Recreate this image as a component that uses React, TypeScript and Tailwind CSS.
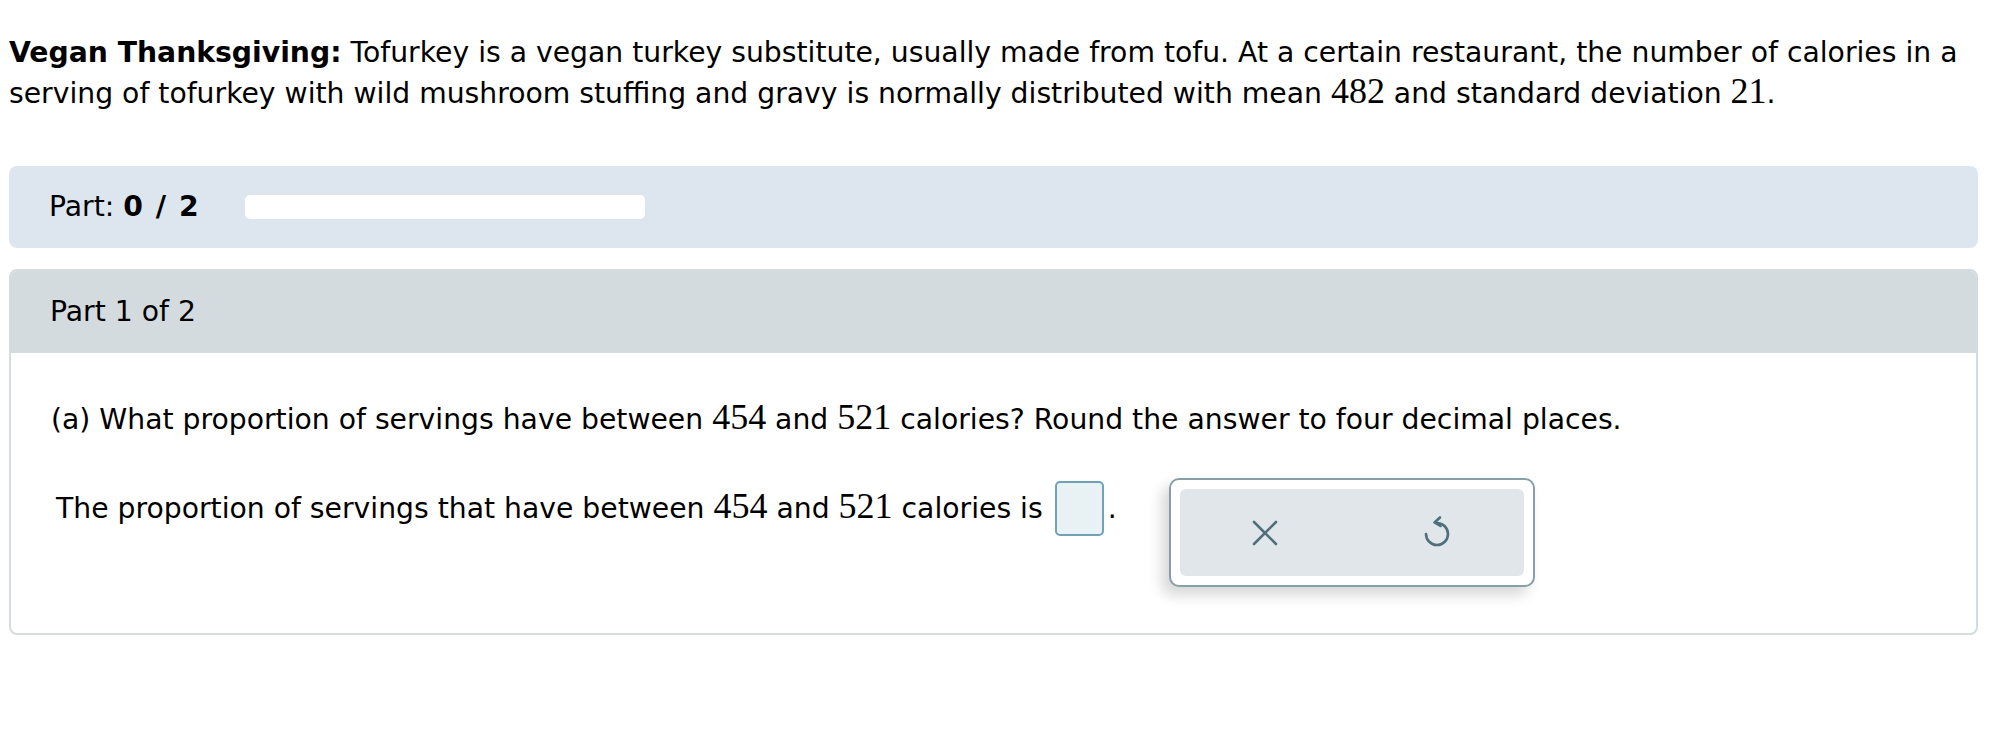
const num = 'font-["Liberation_Serif",serif] text-[36px] leading-none'

function CloseIcon() {
  return (
    <svg width="26" height="26" viewBox="0 0 26 26" fill="none" stroke="#4f6f7a" strokeWidth="2.6" strokeLinecap="round">
      <path d="M2 2 L24 24 M24 2 L2 24" />
    </svg>
  )
}

function ResetIcon() {
  return (
    <svg width="30" height="36" viewBox="0 0 30 36" fill="none" stroke="#4f6f7a" strokeWidth="2.6" strokeLinecap="round" strokeLinejoin="round">
      <path d="M15 8 A11 11 0 1 1 4 19" />
      <path d="M18 2.5 L12.5 7.5 L18.5 11" />
    </svg>
  )
}

export default function App() {
  return (
    <main className='min-h-screen bg-white font-["DejaVu_Sans",Verdana,sans-serif] text-[28.25px] text-black'>
      <div className="pl-[9px] pr-[28px] pt-[32px]">
        <p className="leading-[41px]">
          <b>Vegan Thanksgiving:</b> Tofurkey is a vegan turkey substitute, usually made from tofu. At a certain
          restaurant, the number of calories in a serving of tofurkey with wild mushroom stuffing and gravy is
          normally distributed with mean <span className={num}>482</span> and standard deviation{' '}
          <span className={num}>21</span>.
        </p>

        <div className="mt-[52px] flex h-[82px] items-center rounded-[8px] bg-[#dde6ee] pl-[40px]">
          <span className="w-[196px]">
            Part:{' '}
            <b>
              0 <span className="mx-[3px]">/</span> 2
            </b>
          </span>
          <div className="h-[24px] w-[400px] rounded-[5px] bg-white" />
        </div>

        <section className="mt-[21px] overflow-hidden rounded-[8px] border-2 border-[#d5dce0]">
          <div className="flex h-[82px] items-center bg-[#d3dbde] pl-[39px]">Part 1 of 2</div>
          <div className="h-[280px] pl-[40px] pt-[46px]">
            <p className="leading-[41px]">
              (a) What proportion of servings have between <span className={num}>454</span> and{' '}
              <span className={num}>521</span> calories? Round the answer to four decimal places.
            </p>
            <div className="mt-[41px] flex items-start">
              <span className="ml-[5px] leading-[55px]">
                The proportion of servings that have between <span className={num}>454</span> and{' '}
                <span className={num}>521</span> calories is
              </span>
              <div className="ml-[12px] h-[55px] w-[49px] rounded-[5px] border-2 border-[#6fa3b3] bg-[#e8f2f5]" />
              <span className="ml-[4px] leading-[55px]">.</span>
              <div className="ml-[52px] mt-[-3px] rounded-[10px] border-2 border-[#85a0a8] bg-white p-[9px] shadow-[-7px_8px_14px_rgba(0,0,0,0.16)]">
                <div className="flex h-[87px] w-[344px] items-center justify-around rounded-[6px] bg-[#e0e6e9]">
                  <CloseIcon />
                  <ResetIcon />
                </div>
              </div>
            </div>
          </div>
        </section>
      </div>
    </main>
  )
}
